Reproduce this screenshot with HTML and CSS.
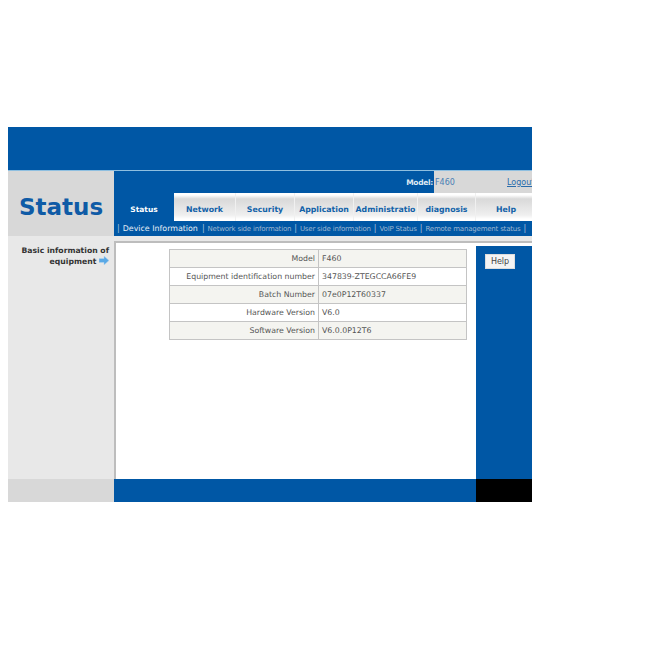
FILE: index.html
```html
<!DOCTYPE html>
<html lang="en">
<head>
    <meta charset="UTF-8">
    <title>Status</title>
    <link rel="stylesheet" href="styles.css">
</head>
<body>
    <div class="page">
        <div class="top-bar"></div>

        <div class="header">
            <div class="title">Status</div>
            <div class="nav">
                <div class="model-row">
                    <div class="model-label">Model:</div>
                    <div class="model-info">
                        <span class="model-value">F460</span>
                        <a href="#" class="logout">Logout</a>
                    </div>
                </div>
                <div class="tabs">
                    <a href="#" class="tab tab-active">Status</a>
                    <a href="#" class="tab tab-network">Network</a>
                    <a href="#" class="tab tab-security">Security</a>
                    <a href="#" class="tab tab-application">Application</a>
                    <a href="#" class="tab tab-admin">Administratio</a>
                    <a href="#" class="tab tab-diagnosis">diagnosis</a>
                    <a href="#" class="tab tab-help">Help</a>
                </div>
                <div class="subnav">
                    <span class="sep">|</span>
                    <a href="#" class="sub-active">Device Information</a>
                    <span class="sep">|</span>
                    <a href="#">Network side information</a>
                    <span class="sep">|</span>
                    <a href="#">User side information</a>
                    <span class="sep">|</span>
                    <a href="#">VoIP Status</a>
                    <span class="sep">|</span>
                    <a href="#">Remote management status</a>
                    <span class="sep">|</span>
                </div>
            </div>
        </div>

        <div class="content">
            <div class="sidebar">
                <span>Basic information of</span>
                <span>equipment
                    <svg class="arrow" width="10" height="9" viewBox="0 0 10 9">
                        <path d="M0 2.5h5V0l5 4.500L5 9V6.500H0z" fill="#5aa9e6" stroke="#b9d6ee" stroke-width="0.5"/>
                    </svg>
                </span>
            </div>
            <div class="work">
                <div class="strip"></div>
                <div class="work-inner">
                    <div class="main">
                        <table class="info">
                            <tr class="odd"><td class="name">Model</td><td>F460</td></tr>
                            <tr><td class="name">Equipment identification number</td><td>347839-ZTEGCCA66FE9</td></tr>
                            <tr class="odd"><td class="name">Batch Number</td><td>07e0P12T60337</td></tr>
                            <tr><td class="name">Hardware Version</td><td>V6.0</td></tr>
                            <tr class="odd"><td class="name">Software Version</td><td>V6.0.0P12T6</td></tr>
                        </table>
                    </div>
                    <div class="help-col">
                        <button class="help-btn">Help</button>
                    </div>
                </div>
            </div>
        </div>

        <div class="footer">
            <div class="foot-left"></div>
            <div class="foot-mid"></div>
            <div class="foot-right"></div>
        </div>
    </div>
</body>
</html>
```

FILE: styles.css
```css
body {
    margin: 0;
    padding: 127px 0 0 8px;
    background: #fff;
    font-family: "DejaVu Sans", Verdana, sans-serif;
    font-size: 8px;
    color: #555;
}
a {
    text-decoration: none;
}
.page {
    width: 524px;
    overflow: hidden;
}
.top-bar {
    height: 43px;
    background: #0057a5;
    border-bottom: 1px solid #8fbfe0;
}
.header {
    display: flex;
    height: 65px;
}
.title {
    width: 106px;
    background: #d8d8d8;
    color: #0f5ba6;
    font-size: 23px;
    font-weight: bold;
    padding: 23px 0 0 11px;
    box-sizing: border-box;
}
.nav {
    width: 418px;
    background: #0057a5;
}
.model-row {
    display: flex;
    height: 22px;
}
.model-label {
    width: 320px;
    padding-right: 1px;
    padding-top: 7px;
    box-sizing: border-box;
    text-align: right;
    color: #dfe9f3;
    font-weight: bold;
    font-size: 7.500px;
    letter-spacing: -0.3px;
}
.model-info {
    width: 98px;
    background: #d8d8d8;
    display: flex;
    padding-top: 7px;
    box-sizing: border-box;
    white-space: nowrap;
}
.model-value {
    color: #4a7fb5;
    font-size: 8px;
    margin-left: 1px;
    width: 72px;
    flex-shrink: 0;
}
.logout {
    color: #2a6cab;
    text-decoration: underline;
    font-size: 8px;
}
.tabs {
    display: flex;
    height: 28px;
    background: linear-gradient(#fff 0, #fff 2px, #d9d9d9 6px, #efefef 22px, #fff 26px);
}
.tab {
    display: block;
    text-align: center;
    font-weight: bold;
    font-size: 7.800px;
    line-height: 33px;
    color: #1262a8;
    white-space: nowrap;
    overflow: hidden;
    border-right: 1px solid #f0f0f0;
    box-sizing: border-box;
}
.tab-active {
    width: 60px;
    background: #0057a5;
    color: #fff;
    font-size: 7.500px;
    border-right: 0;
}
.tab-network { width: 62px; }
.tab-security { width: 59px; }
.tab-application { width: 59px; }
.tab-admin { width: 64px; }
.tab-diagnosis { width: 58px; }
.tab-help { width: 56px; border-right: 0; padding-left: 4px; }
.subnav {
    height: 15px;
    display: flex;
    align-items: center;
    padding-left: 3px;
    color: #a9c2dc;
    font-size: 8px;
    white-space: nowrap;
    overflow: hidden;
}
.sep {
    margin: 0 3px 0 0;
}
.subnav a {
    color: #9fb6d0;
    font-size: 7px;
    letter-spacing: -0.2px;
    margin-right: 3px;
}
.subnav .sub-active {
    color: #e6eef6;
    font-size: 7.900px;
    letter-spacing: 0;
    margin-right: 4px;
}
.content {
    display: flex;
    height: 243px;
}
.sidebar {
    width: 106px;
    background: #e8e8e8;
    box-sizing: border-box;
    padding: 10px 5px 0 0;
    display: flex;
    flex-direction: column;
    align-items: flex-end;
    font-weight: bold;
    font-size: 7.700px;
    line-height: 10px;
    color: #333;
}
.arrow {
    vertical-align: -1px;
}
.work {
    width: 418px;
    display: flex;
    flex-direction: column;
}
.strip {
    height: 5px;
    background: #e8e8e8;
}
.work-inner {
    flex: 1;
    display: flex;
    background: #fff;
    border-top: 2px solid #bdbdbd;
    border-left: 2px solid #bdbdbd;
}
.main {
    width: 360px;
    box-sizing: border-box;
    padding: 6px 0 0 53px;
}
.info {
    border-collapse: collapse;
    width: 298px;
    font-size: 7.800px;
}
.info td {
    border: 1px solid #c4c4c4;
    height: 18px;
    padding: 0 3px;
    white-space: nowrap;
    box-sizing: border-box;
}
.info .name {
    width: 149px;
    text-align: right;
}
.info .odd {
    background: #f4f4f0;
}
.help-col {
    width: 56px;
    margin-top: 3px;
    background: #0057a5;
    padding: 8px 0 0 9px;
    box-sizing: border-box;
}
.help-btn {
    display: block;
    width: 30px;
    height: 15px;
    padding: 0;
    border: 1px solid #ddd;
    background: #f4f4f4;
    color: #444;
    font-family: "DejaVu Sans", Verdana, sans-serif;
    font-size: 8px;
}
.footer {
    display: flex;
    height: 23px;
}
.foot-left {
    width: 106px;
    background: #d8d8d8;
}
.foot-mid {
    width: 362px;
    background: #0057a5;
}
.foot-right {
    width: 56px;
    background: #000;
}
```
